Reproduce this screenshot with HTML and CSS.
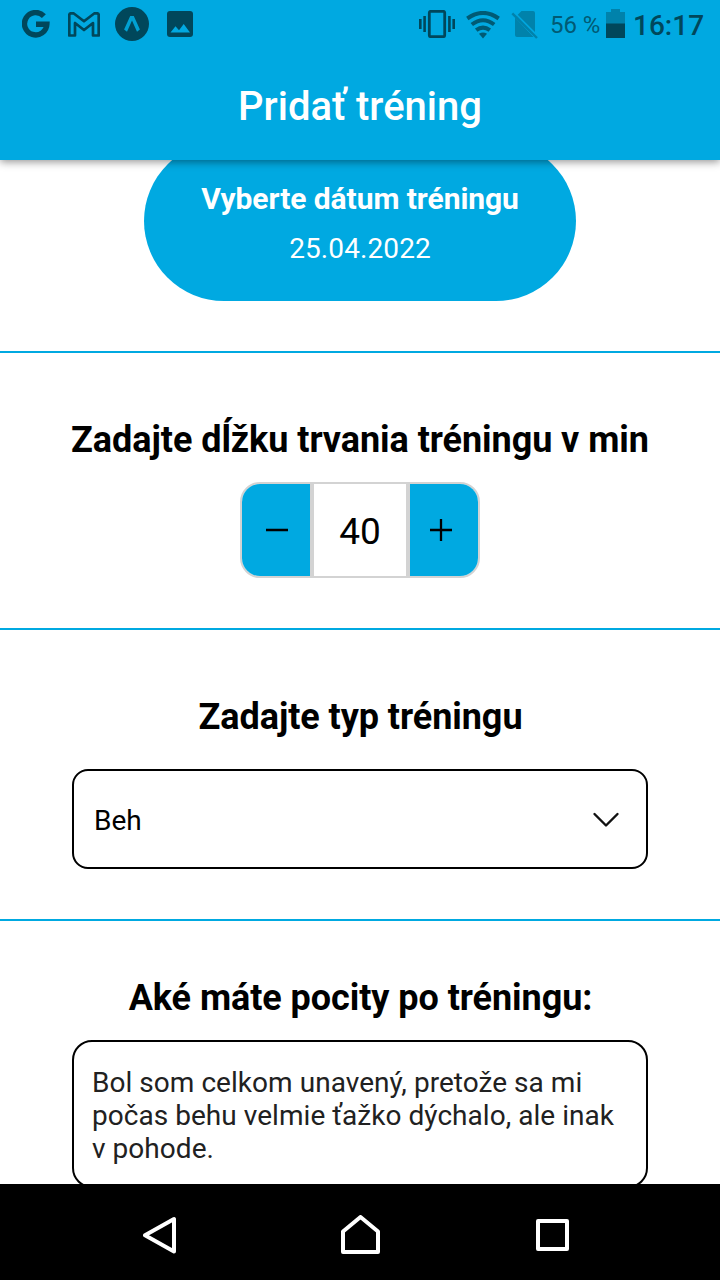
FILE: index.html
```html
<!DOCTYPE html>
<html lang="sk">
<head>
<meta charset="utf-8">
<title>Pridať tréning</title>
<link rel="stylesheet" href="styles.css">
</head>
<body>
<div class="screen">
  <header class="app-header">
    <div class="status-bar">
      <div class="notifications">
        <svg width="28" height="28" viewBox="22 10 28 28" fill="none" stroke="#00475b" stroke-width="5.4"><path d="M43.9 16.1A11.2 11.2 0 1 0 46.9 24.2H36"/></svg>
        <svg class="mail" width="32" height="25" viewBox="68 11 32 25" fill="none" stroke="#00475b" stroke-width="2.700" stroke-linejoin="round"><path d="M69.300 34V14Q69.300 12.300 71 12.300H73.500L84 20.300L94.500 12.300H97Q98.700 12.300 98.700 14V34.500H93V22L84 29L75 22V34.500H69.300Z"/></svg>
        <svg class="expo" width="34" height="34" viewBox="115 7 34 34"><circle cx="132" cy="24" r="17" fill="#00475b"/><path d="M130.200 16H133.800L139.900 29.500L137 31.800L132 20.500L127 31.800L124.100 29.500Z" fill="#00a1d2"/></svg>
        <svg class="photo" width="26" height="26" viewBox="167 11 26 26"><rect x="167" y="11" width="26" height="26" rx="3" fill="#00475b"/><path d="M170.500 32.500L175.500 26.200L179 30.300L183.700 24L190 32.500Z" fill="#00a9e1"/></svg>
      </div>
      <div class="system">
        <svg width="36" height="28" viewBox="419 10 36 28" fill="none" stroke="#00475b"><rect x="429.300" y="11.300" width="15.400" height="25.400" rx="1.500" stroke-width="2.800"/><path d="M420.300 19V29M424.600 16V32M449.400 16V32M453.700 19V29" stroke-width="2.600"/></svg>
        <svg class="wifi" width="34" height="28" viewBox="466 11 34 28" fill="none" stroke="#005a74" stroke-width="4"><path d="M467.300 18.500Q483 7.300 498.700 18.500"/><path d="M471.800 24.500Q483 16 494.200 24.500"/><path d="M476.200 30.200Q483 25 489.800 30.200"/><path d="M479 33.800Q483 31.300 487 33.800L483 38.600Z" fill="#005a74" stroke="none"/></svg>
        <svg class="sim" width="27" height="28" viewBox="511 11 27 28"><path d="M521.500 11H533Q535 11 535 13V33.200L516.700 15.800ZM515 17.500L533.500 37H517Q515 37 515 35Z" fill="#0082ab"/><path d="M513.500 11.500L537 35" stroke="#00a9e1" stroke-width="1.200"/><path d="M512.300 13.300L537 38" stroke="#0082ab" stroke-width="2.400"/></svg>
        <span class="battery-level">56 %</span>
        <svg class="battery" width="19" height="29" viewBox="606 9 19 29"><path d="M606 12H611V9H620V12H625V24H606Z" fill="#0082ab"/><path d="M606 23.500H625V38H606Z" fill="#00475b"/></svg>
        <span class="clock">16:17</span>
      </div>
    </div>
    <h1 class="title">Pridať tréning</h1>
  </header>

  <main class="content">
    <section class="section section-date">
      <button class="date-button">
        <strong class="date-label">Vyberte dátum tréningu</strong>
        <span class="date-value">25.04.2022</span>
      </button>
    </section>
    <section class="section section-duration">
      <h2 class="heading">Zadajte dĺžku trvania tréningu v min</h2>
      <div class="stepper">
        <button class="step step-minus"><svg width="22" height="22" viewBox="0 0 22 22"><path d="M0 11H22" stroke="#000" stroke-width="2.300"/></svg></button>
        <span class="step-value">40</span>
        <button class="step step-plus"><svg width="22" height="22" viewBox="0 0 22 22"><path d="M0 11H22M11 0V22" stroke="#000" stroke-width="2.300"/></svg></button>
      </div>
    </section>
    <section class="section section-type">
      <h2 class="heading">Zadajte typ tréningu</h2>
      <div class="select">
        <span>Beh</span>
        <svg width="28" height="16" viewBox="0 0 28 16" fill="none" stroke="#111" stroke-width="2.400" stroke-linecap="round" stroke-linejoin="round"><path d="M2.500 2L14 13.500L25.500 2"/></svg>
      </div>
    </section>
    <section class="section section-notes">
      <h2 class="heading">Aké máte pocity po tréningu:</h2>
      <div class="notes">Bol som celkom unavený, pretože sa mi<br>počas behu velmie ťažko dýchalo, ale inak<br>v pohode.</div>
    </section>
  </main>

  <nav class="nav-bar">
    <svg width="34" height="38" viewBox="143 1216 34 38"><path d="M174 1219V1251.500L145 1235.300Z"/></svg>
    <svg class="home" width="40" height="40" viewBox="341 1215 40 40"><path d="M343 1252V1231.500L360.500 1217L378 1231.500V1252Z"/></svg>
    <svg width="34" height="34" viewBox="536 1218 34 34"><path d="M538 1221H567V1249H538Z"/></svg>
  </nav>
</div>
</body>
</html>
```
FILE: styles.css
```css
* { box-sizing: border-box; }
body { margin: 0; font-family: Roboto, "Noto Sans", sans-serif; color: #000; background: #fff; }
svg { display: block; flex: none; }
h1, h2 { margin: 0; }
button { border: 0; padding: 0; font: inherit; color: inherit; }

.screen { width: 720px; height: 1280px; display: flex; flex-direction: column; overflow: hidden; }

.app-header { position: relative; z-index: 1; flex: none; height: 160px; background: #00a9e1; box-shadow: 0 2px 8px rgba(0, 0, 0, .42); }
.status-bar { height: 48px; padding: 0 16px 0 22px; display: flex; justify-content: space-between; color: #00475b; }
.notifications, .system { display: flex; align-items: center; height: 48px; }
.mail { margin-left: 18px; }
.expo { margin-left: 15px; }
.photo { margin-left: 18px; }
.wifi { margin: 2px 0 0 11px; }
.sim { margin: 2px 0 0 11px; }
.battery-level { width: 56px; padding: 2px 0 0 12px; font-size: 24px; line-height: 28px; letter-spacing: -.1px; white-space: nowrap; color: #005a74; margin-right: 12px; }
.battery { margin-bottom: 1px; }
.clock { width: 71px; margin: 4px 0 0 8px; font-size: 28px; line-height: 32px; font-weight: 500; white-space: nowrap; }
.title { padding-top: 35px; font-size: 40px; line-height: 48px; font-weight: 500; text-align: center; color: #fff; }

.content { flex: 1; min-height: 0; overflow: hidden; }
.section { display: flex; flex-direction: column; align-items: center; border-bottom: 2px solid #00a9e1; }
.heading { font-size: 36px; line-height: 44px; font-weight: 700; letter-spacing: -.06px; white-space: nowrap; }

.section-date { height: 193px; }
.date-button { flex: none; width: 432px; height: 160px; margin-top: -19px; border-radius: 80px; background: #00a9e1; color: #fff; display: flex; flex-direction: column; align-items: center; padding-top: 40px; }
.date-label { font-size: 30px; line-height: 36px; letter-spacing: -.06px; }
.date-value { margin-top: 15px; font-size: 28px; line-height: 34px; letter-spacing: .1px; }

.section-duration { height: 277px; padding-top: 65px; }
.stepper { width: 240px; height: 96px; margin-top: 20px; border: 2px solid #d3d3d3; border-radius: 20px; display: flex; overflow: hidden; }
.step { width: 68px; background: #00a9e1; display: flex; align-items: center; justify-content: center; }
.step-minus { padding-left: 2px; }
.step-plus { padding-right: 6px; }
.step-value { width: 100px; padding-top: 3px; border: solid #d3d3d3; border-width: 0 4px; display: flex; align-items: center; justify-content: center; font-size: 37px; }

.section-type { height: 291px; padding-top: 65px; }
.section-type .heading, .section-notes .heading { padding-left: 1px; }
.select { width: 576px; height: 100px; margin-top: 30px; padding: 2px 26px 0 20px; border: 2px solid #000; border-radius: 16px; display: flex; align-items: center; justify-content: space-between; font-size: 28px; }

.section-notes { padding-top: 55px; }
.notes { width: 576px; height: 148px; margin-top: 20px; padding: 24px 18px; border: 2px solid #000; border-radius: 20px; font-size: 28px; line-height: 33px; letter-spacing: .04px; white-space: nowrap; color: #212121; }

.nav-bar { flex: none; height: 96px; padding: 6px 150px 0 143px; background: #000; display: flex; align-items: center; justify-content: space-between; }
.home { margin-left: 8px; }
.nav-bar path { fill: none; stroke: #fff; stroke-width: 4px; stroke-linejoin: round; }
```
